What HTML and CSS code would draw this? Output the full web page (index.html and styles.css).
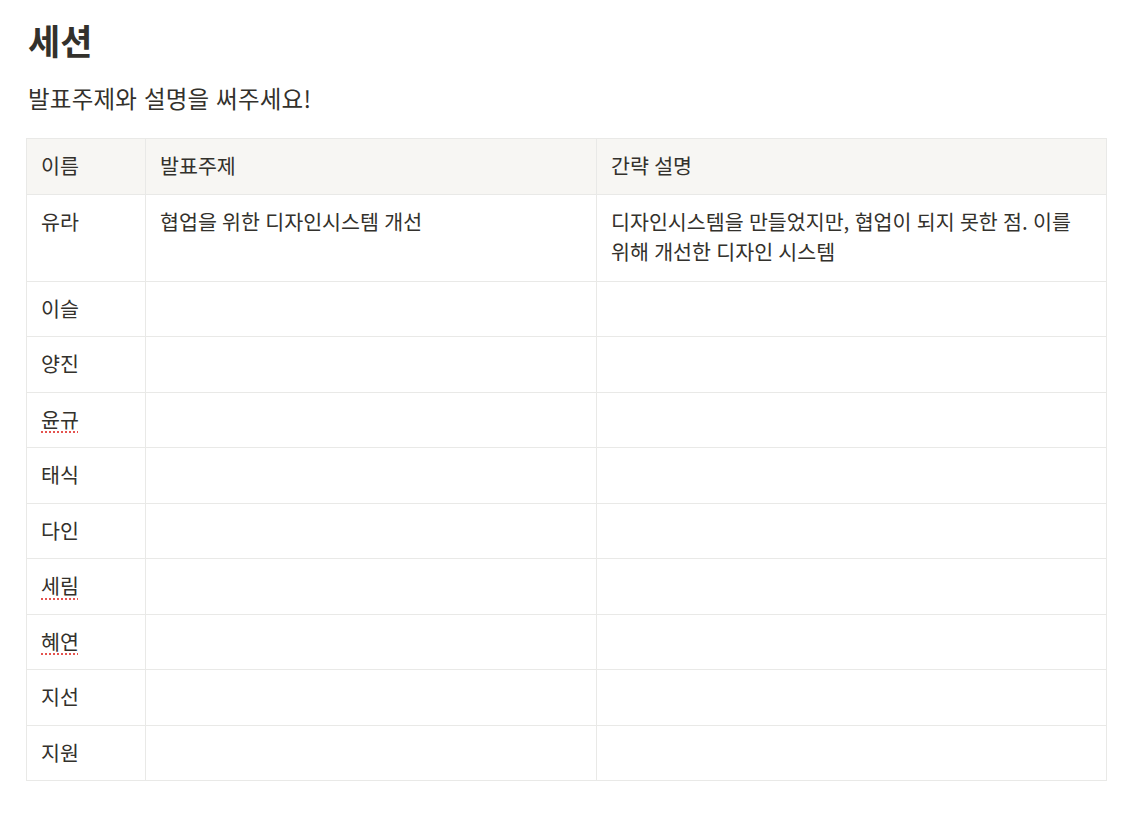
FILE: index.html
```html
<!DOCTYPE html>
<html lang="ko">
<head>
<meta charset="utf-8">
<title>세션</title>
<link rel="stylesheet" href="styles.css">
</head>
<body>
<div class="page">
  <h1 class="title">세션</h1>
  <p class="subtitle">발표주제와 설명을 써주세요!</p>
  <table class="sessions">
    <colgroup>
      <col class="col-name">
      <col class="col-topic">
      <col class="col-desc">
    </colgroup>
    <thead>
      <tr><th>이름</th><th>발표주제</th><th>간략 설명</th></tr>
    </thead>
    <tbody>
      <tr class="tall"><td>유라</td><td>협업을 위한 디자인시스템 개선</td><td>디자인시스템을 만들었지만, 협업이 되지 못한 점. 이를 위해 개선한 디자인 시스템</td></tr>
      <tr><td>이슬</td><td></td><td></td></tr>
      <tr><td>양진</td><td></td><td></td></tr>
      <tr><td><span class="spell">윤규</span></td><td></td><td></td></tr>
      <tr><td>태식</td><td></td><td></td></tr>
      <tr><td>다인</td><td></td><td></td></tr>
      <tr><td><span class="spell">세림</span></td><td></td><td></td></tr>
      <tr><td><span class="spell">혜연</span></td><td></td><td></td></tr>
      <tr><td>지선</td><td></td><td></td></tr>
      <tr><td>지원</td><td></td><td></td></tr>
    </tbody>
  </table>
</div>
</body>
</html>
```

FILE: styles.css
```css
html, body {
  margin: 0;
  padding: 0;
  background: #ffffff;
}

body {
  font-family: "Noto Sans CJK KR", "Noto Sans", sans-serif;
  color: #33312c;
}

.page {
  padding: 18px 40px 0 26px;
}

.title {
  margin: 0 0 0 2px;
  font-size: 35px;
  font-weight: 700;
  line-height: 44px;
}

.subtitle {
  margin: 21px 0 0 2px;
  font-size: 23.5px;
  line-height: 30px;
  font-weight: 400;
  letter-spacing: 0.2px;
}

.sessions {
  margin-top: 25px;
  width: 1080px;
  border-collapse: collapse;
  table-layout: fixed;
  font-size: 20.6px;
  line-height: 30.5px;
  word-spacing: -0.5px;
}

.col-name { width: 119px; }
.col-topic { width: 451px; }
.col-desc { width: 510px; }

.sessions th,
.sessions td {
  border: 1px solid #e9e9e7;
  padding: 11px 14px 13px;
  text-align: left;
  vertical-align: top;
  font-weight: 400;
}

.sessions th {
  background: #f7f6f3;
}

.sessions .tall td {
  padding-bottom: 14px;
}

.spell {
  text-decoration: underline dotted #e5534f;
  text-decoration-thickness: 2px;
  text-underline-offset: 4px;
}
```
